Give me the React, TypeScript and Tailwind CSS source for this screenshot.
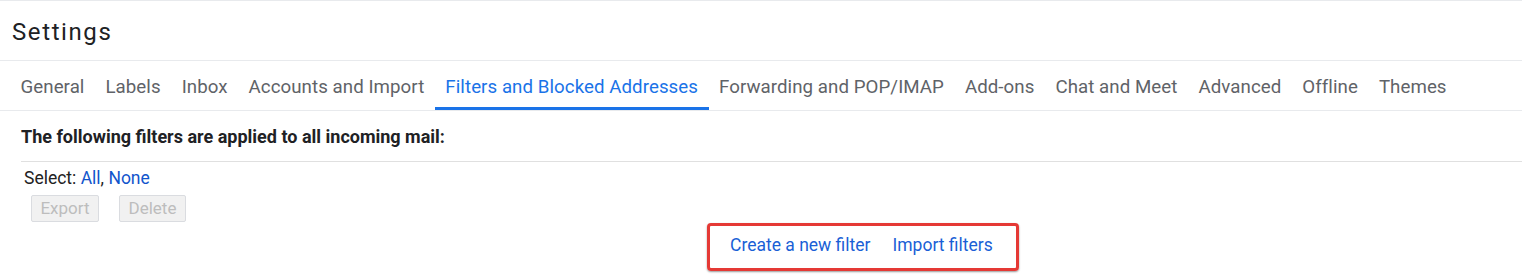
import React from "react";

const tabs = [
  "General",
  "Labels",
  "Inbox",
  "Accounts and Import",
  "Filters and Blocked Addresses",
  "Forwarding and POP/IMAP",
  "Add-ons",
  "Chat and Meet",
  "Advanced",
  "Offline",
  "Themes",
];

export default function App() {
  return (
    <div className="w-[1522px] h-[280px] bg-white overflow-hidden border-t border-[#e8eaed]" style={{ fontFamily: "Roboto, 'Liberation Sans', sans-serif" }}>
      <div className="h-[60px] flex items-center pl-[12px] border-b border-[#e8eaed]">
        <h1 className="text-[24px] tracking-[1.6px] text-[#202124] font-normal pt-[3px]">Settings</h1>
      </div>
      <div className="h-[50px] flex items-stretch pl-[10px] border-b border-[#e8eaed]">
        {tabs.map((t, i) => (
          <div
            key={t}
            className={
              "px-[10.5px] flex items-center text-[18.7px] tracking-[0.06px] " +
              (i === 4
                ? "text-[#1a73e8] border-b-[3px] border-[#1a73e8] pt-[7px]"
                : "text-[#5f6368] pt-[4px]")
            }
          >
            {t}
          </div>
        ))}
      </div>
      <div className="pl-[21px]">
        <div className="h-[51px] flex items-center text-[18px] font-bold text-[#202124] border-b border-[#e0e0e0]">
          The following filters are applied to all incoming mail:
        </div>
        <div className="pl-[3px] pt-[7px] text-[17.5px] text-[#222] leading-[19px]">
          Select: <span className="text-[#1155cc]">All</span>, <span className="text-[#1155cc]">None</span>
        </div>
        <div className="flex gap-[20px] pl-[10px] mt-[7px]">
          <div className="h-[27px] w-[68px] flex items-center justify-center bg-[#f1f1f1] border border-[#dadce0] rounded-[2px] text-[#bdbdbd] text-[17px]">Export</div>
          <div className="h-[27px] w-[67px] flex items-center justify-center bg-[#f1f1f1] border border-[#dadce0] rounded-[2px] text-[#bdbdbd] text-[17px]">Delete</div>
        </div>
        <div className="flex justify-start pl-[686px] mt-[1px]">
          <div className="h-[48px] w-[312px] border-[3px] border-[#e53935] rounded-[4px] shadow-[0_1px_2px_rgba(0,0,0,0.4)] flex items-center gap-[22px] pl-[20px] pb-[3px] text-[17.5px] text-[#1a5fd6]">
            <span>Create a new filter</span>
            <span>Import filters</span>
          </div>
        </div>
      </div>
    </div>
  );
}
